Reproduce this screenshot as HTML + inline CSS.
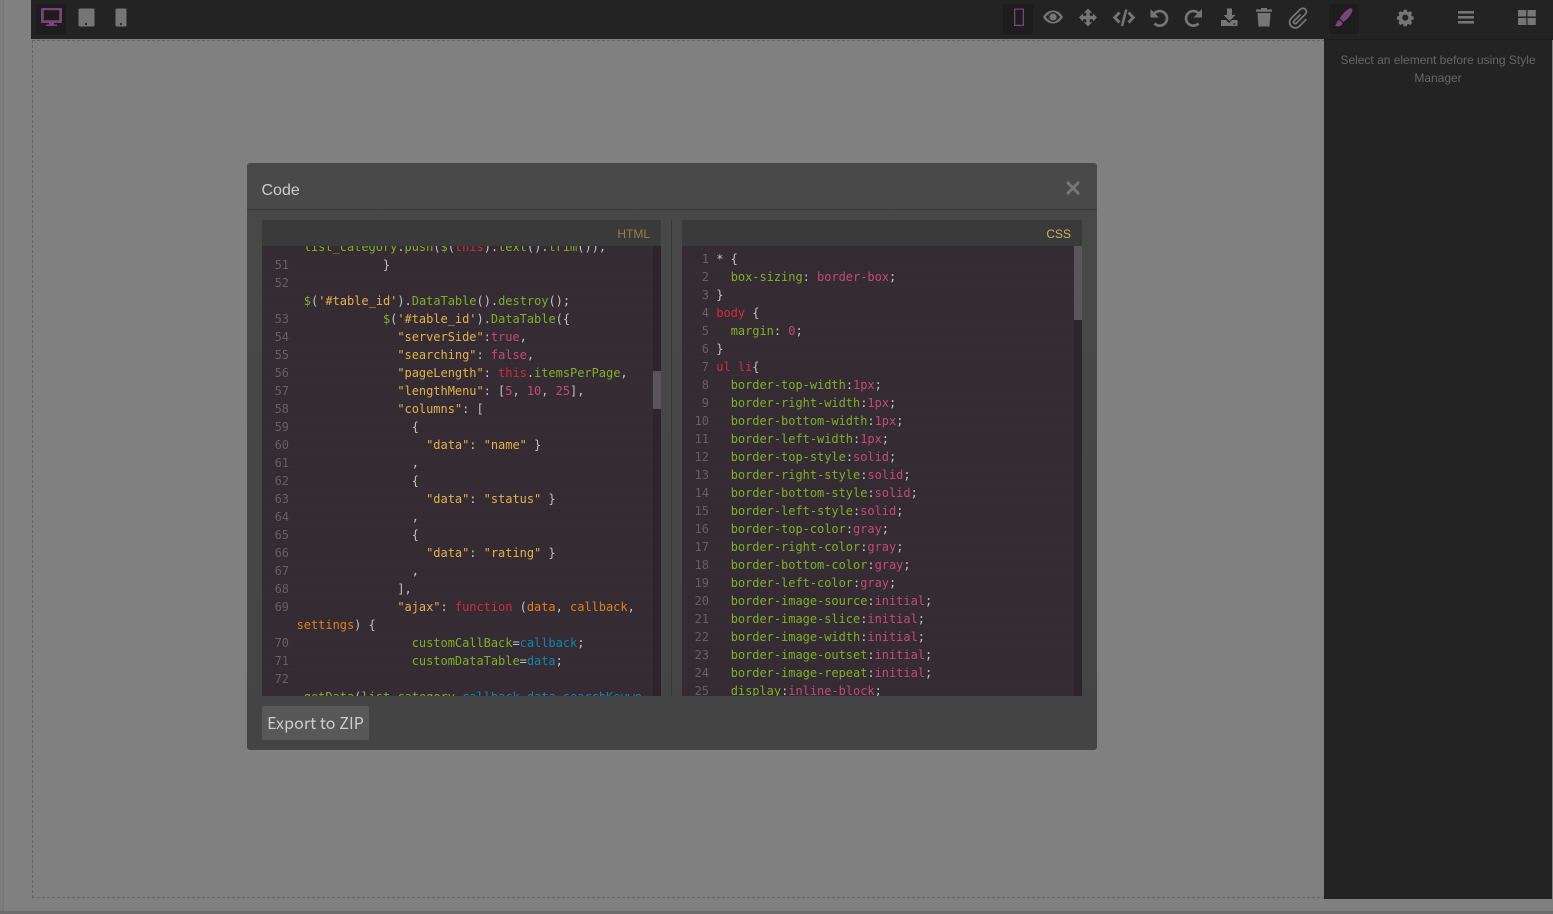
<!DOCTYPE html>
<html><head><meta charset="utf-8"><style>
html,body{margin:0;padding:0;width:1553px;height:914px;overflow:hidden;background:#808080;font-family:"Liberation Sans",sans-serif}
.a{position:absolute}
svg{position:absolute;overflow:visible}
.code{font:12px/18px "DejaVu Sans Mono","Liberation Mono",monospace;letter-spacing:-.03px;color:#c2c2c2;background:#342b33;overflow:hidden}
.r{position:relative;height:18px;white-space:pre;box-shadow:inset 0 -1px 0 rgba(255,255,255,.012)}
.r i{position:absolute;left:0;width:27px;text-align:right;font-style:normal;color:#656065}
.h .r{padding-left:34.600px}.c .r{padding-left:34.300px}
.g{color:#7eb02a}.d{color:#cf2d3e}.p{color:#c44a78}.o{color:#e0801c}.y{color:#e0b24e}.b{color:#1284b0}
.hd{background:#3a3a3a;height:26px;font-size:12px;line-height:28px;text-align:right}
</style></head><body>
<div class="a" style="left:0;top:0;width:3px;height:914px;background:#7c7c7c"></div>
<div class="a" style="left:3px;top:0;width:1px;height:914px;background:#767676"></div>
<div class="a" style="left:0;top:911px;width:1553px;height:3px;background:#6c6c6c"></div>
<div class="a" style="left:32px;top:40px;width:1291px;height:856px;border:1px dashed #666"></div>

<div class="a" style="left:31px;top:0;width:1522px;height:39px;background:#232323"></div>
<div class="a" style="left:1324px;top:39px;width:228px;height:860px;background:#232323"></div>
<div class="a" style="left:1324px;top:39px;width:229px;height:1px;background:#1e1e1e"></div>

<div class="a" style="left:36px;top:4px;width:30px;height:30px;background:#1d1d1d;border-radius:2px"></div>
<div class="a" style="left:1003px;top:4px;width:30px;height:30px;background:#1d1d1d;border-radius:2px"></div>
<div class="a" style="left:1329px;top:4px;width:30px;height:30px;background:#1d1d1d;border-radius:2px"></div>

<svg style="left:0;top:0" width="1553" height="40" viewBox="0 0 1553 40">
<g fill="#7a4379">
<path fill-rule="evenodd" d="M42 8h19a1 1 0 0 1 1 1v13a1 1 0 0 1-1 1h-7v1.500h3V26H46v-1.500h3V23h-7a1 1 0 0 1-1-1V9a1 1 0 0 1 1-1zm1.800 2.300v10h15.400v-10z"/>
<path fill-rule="evenodd" d="M1014 8.500h10V26h-10zm1.300 1.300v15h7.400v-15z"/>
<path d="M1338 20.500c2-.5 4 1 4.500 3-1 3-5 3.500-7.500 2.200 1.500-1 1.500-3.700 3-5.200z"/>
<path d="M1349.500 8.500c1.700-.8 3.300.6 2.800 2.500-1.300 4-4.800 8-8.800 11l-4-3.500c2.500-4 5.500-7.500 10-10z"/>
</g>
<g fill="#757575">
<rect x="78.500" y="8.500" width="16" height="18" rx="1.500"/>
<rect x="115.500" y="8.500" width="11" height="18" rx="1.500"/>
</g>
<rect x="85" y="23" width="2" height="2" fill="#2a2a2a"/><rect x="120" y="23" width="2" height="2" fill="#2a2a2a"/>
<g fill="#757575">
<!-- eye -->
<path d="M1043 17c2.500-4.300 6-6.500 10-6.500s7.500 2.200 10 6.500c-2.500 4.300-6 6.500-10 6.500s-7.500-2.200-10-6.500z"/>
<circle cx="1053" cy="17" r="5" fill="#232323"/>
<circle cx="1053" cy="17" r="3.600"/>
<path d="M1045.800 17c.8-1.200 1.800-2.200 2.900-3a6.500 6.500 0 0 0 0 6c-1.100-.8-2.100-1.800-2.900-3zM1060.200 17c-.8-1.200-1.800-2.200-2.900-3a6.500 6.500 0 0 1 0 6c1.100-.8 2.100-1.800 2.900-3z" fill="#232323"/>
<!-- move -->
<path d="M1088 8.500l4.200 4.200h-2.500v3.100h3.100v-2.500l4.200 4.200-4.200 4.200v-2.500h-3.100v3.100h2.500l-4.200 4.200-4.200-4.200h2.500v-3.100h-3.100v2.500l-4.200-4.200 4.200-4.200v2.500h3.100v-3.100h-2.500z"/>
<!-- code -->
<path d="M1119.500 12.500l-4.800 5 4.800 5" fill="none" stroke="#757575" stroke-width="2.900"/>
<path d="M1128.500 12.500l4.800 5-4.800 5" fill="none" stroke="#757575" stroke-width="2.900"/>
<path d="M1126.300 9.500L1122 26" fill="none" stroke="#757575" stroke-width="2.500"/>
<!-- undo -->
<path d="M1153.500 14.500a7.300 7.300 0 1 1 1 9" fill="none" stroke="#757575" stroke-width="2.700"/>
<path d="M1150.500 9v8.500h8.500z"/>
<!-- redo -->
<path d="M1199.500 14.500a7.300 7.300 0 1 0-1 9" fill="none" stroke="#757575" stroke-width="2.700"/>
<path d="M1202 9v8.500h-8.500z"/>
<!-- download -->
<path d="M1227 8.500h5v6.500h3.500l-6 6-6-6h3.500z"/>
<path fill-rule="evenodd" d="M1221 20h5l3 3 3-3h5.500v6h-16.500zm12 3.500v1h2.500v-1z"/>
<!-- trash -->
<path d="M1256 9.500h16v2.300h-16zM1261 8h6v2h-6zM1257.500 13h13l-.9 13.500h-11.200z"/>
<!-- clip -->
<path d="M1300.500 14.500l-6.500 6.500a1.600 1.600 0 0 0 2.300 2.300l9-9a3.500 3.500 0 0 0-5-5l-9 9a5.600 5.600 0 0 0 8 8l7-7" fill="none" stroke="#757575" stroke-width="1.800"/>
<!-- gear -->
<g transform="translate(1405.250 17.500) scale(.85) translate(-1405.250 -18)">
<path fill-rule="evenodd" d="M1403.500 8.800h3.500l.5 2.300 1.500.6 2-1.200 2.400 2.400-1.200 2 .6 1.500 2.300.5v3.500l-2.300.5-.6 1.500 1.200 2-2.400 2.400-2-1.200-1.500.6-.5 2.300h-3.500l-.5-2.300-1.500-.6-2 1.200-2.400-2.400 1.200-2-.6-1.500-2.300-.5v-3.500l2.300-.5.600-1.500-1.200-2 2.400-2.400 2 1.200 1.500-.6zm1.750 5.700a3.600 3.600 0 1 0 0 7.200 3.600 3.600 0 0 0 0-7.200z"/>
</g>
<!-- bars -->
<rect x="1458" y="11" width="16" height="2.600"/><rect x="1458" y="16" width="16" height="2.600"/><rect x="1458" y="21" width="16" height="2.600"/>
<!-- windows -->
<rect x="1518" y="10" width="8.300" height="6.500"/><rect x="1527.500" y="10" width="8.300" height="6.500"/><rect x="1518" y="18" width="8.300" height="7"/><rect x="1527.500" y="18" width="8.300" height="7"/>
</g>
</svg>

<div class="a" style="left:1324px;top:51px;width:228px;font-size:12px;line-height:18px;letter-spacing:-.01px;color:#666;text-align:center">Select an element before using Style Manager</div>

<!-- modal -->
<div class="a" style="left:247px;top:163px;width:850px;height:587px;background:linear-gradient(#494949,#444);border-radius:3px"></div>
<div class="a" style="left:247px;top:209px;width:850px;height:1px;background:#393939"></div>
<div class="a" style="left:261.500px;top:181px;font-size:16px;line-height:20px;color:#ccc">Code</div>
<svg style="left:1066px;top:181px" width="14" height="14"><path d="M1 1l12 12M13 1L1 13" stroke="#777" stroke-width="2.900"/></svg>
<div class="a" style="left:671px;top:220px;width:1px;height:476px;background:#383838"></div>

<div class="a hd" style="left:262px;top:220px;width:388px;padding-right:11px;color:#9c7c48">HTML</div>
<div class="a hd" style="left:682px;top:220px;width:389px;padding-right:11px;color:#cdb35f">CSS</div>

<div class="a code h" style="left:262px;top:246px;width:399px;height:450px">
<div style="margin-top:-8px">
<div class="r"> <span class="g">list_category</span>.<span class="g">push</span>(<span class="g">$</span>(<span class="d">this</span>).<span class="g">text</span>().<span class="g">trim</span>());</div>
<div class="r"><i>51</i>            }</div>
<div class="r"><i>52</i></div>
<div class="r"> <span class="g">$</span>(<span class="y">'#table_id'</span>).<span class="g">DataTable</span>().<span class="g">destroy</span>();</div>
<div class="r"><i>53</i>            <span class="g">$</span>(<span class="y">'#table_id'</span>).<span class="g">DataTable</span>({</div>
<div class="r"><i>54</i>              <span class="y">"serverSide"</span>:<span class="p">true</span>,</div>
<div class="r"><i>55</i>              <span class="y">"searching"</span>: <span class="p">false</span>,</div>
<div class="r"><i>56</i>              <span class="y">"pageLength"</span>: <span class="d">this</span>.<span class="g">itemsPerPage</span>,</div>
<div class="r"><i>57</i>              <span class="y">"lengthMenu"</span>: [<span class="p">5</span>, <span class="p">10</span>, <span class="p">25</span>],</div>
<div class="r"><i>58</i>              <span class="y">"columns"</span>: [</div>
<div class="r"><i>59</i>                {</div>
<div class="r"><i>60</i>                  <span class="y">"data"</span>: <span class="y">"name"</span> }</div>
<div class="r"><i>61</i>                ,</div>
<div class="r"><i>62</i>                {</div>
<div class="r"><i>63</i>                  <span class="y">"data"</span>: <span class="y">"status"</span> }</div>
<div class="r"><i>64</i>                ,</div>
<div class="r"><i>65</i>                {</div>
<div class="r"><i>66</i>                  <span class="y">"data"</span>: <span class="y">"rating"</span> }</div>
<div class="r"><i>67</i>                ,</div>
<div class="r"><i>68</i>              ],</div>
<div class="r"><i>69</i>              <span class="y">"ajax"</span>: <span class="d">function</span> (<span class="o">data</span>, <span class="o">callback</span>,</div>
<div class="r"><span class="o">settings</span>) {</div>
<div class="r"><i>70</i>                <span class="g">customCallBack</span>=<span class="b">callback</span>;</div>
<div class="r"><i>71</i>                <span class="g">customDataTable</span>=<span class="b">data</span>;</div>
<div class="r"><i>72</i></div>
<div class="r"> <span class="g">getData</span>(<span class="g">list_category</span>,<span class="b">callback</span>,<span class="b">data</span>,<span class="b">searchKeywo</span></div>
</div>
<div class="a" style="left:391px;top:0;width:8px;height:450px;background:#2e252c"></div>
<div class="a" style="left:391px;top:125px;width:8px;height:38px;background:#5a555a"></div>
</div>

<div class="a code c" style="left:682px;top:246px;width:400px;height:450px">
<div style="margin-top:4px">
<div class="r"><i>1</i>* {</div>
<div class="r"><i>2</i>  <span class="g">box-sizing</span>: <span class="p">border-box</span>;</div>
<div class="r"><i>3</i>}</div>
<div class="r"><i>4</i><span class="d">body</span> {</div>
<div class="r"><i>5</i>  <span class="g">margin</span>: <span class="p">0</span>;</div>
<div class="r"><i>6</i>}</div>
<div class="r"><i>7</i><span class="d">ul li</span>{</div>
<div class="r"><i>8</i>  <span class="g">border-top-width</span>:<span class="p">1px</span>;</div>
<div class="r"><i>9</i>  <span class="g">border-right-width</span>:<span class="p">1px</span>;</div>
<div class="r"><i>10</i>  <span class="g">border-bottom-width</span>:<span class="p">1px</span>;</div>
<div class="r"><i>11</i>  <span class="g">border-left-width</span>:<span class="p">1px</span>;</div>
<div class="r"><i>12</i>  <span class="g">border-top-style</span>:<span class="p">solid</span>;</div>
<div class="r"><i>13</i>  <span class="g">border-right-style</span>:<span class="p">solid</span>;</div>
<div class="r"><i>14</i>  <span class="g">border-bottom-style</span>:<span class="p">solid</span>;</div>
<div class="r"><i>15</i>  <span class="g">border-left-style</span>:<span class="p">solid</span>;</div>
<div class="r"><i>16</i>  <span class="g">border-top-color</span>:<span class="p">gray</span>;</div>
<div class="r"><i>17</i>  <span class="g">border-right-color</span>:<span class="p">gray</span>;</div>
<div class="r"><i>18</i>  <span class="g">border-bottom-color</span>:<span class="p">gray</span>;</div>
<div class="r"><i>19</i>  <span class="g">border-left-color</span>:<span class="p">gray</span>;</div>
<div class="r"><i>20</i>  <span class="g">border-image-source</span>:<span class="p">initial</span>;</div>
<div class="r"><i>21</i>  <span class="g">border-image-slice</span>:<span class="p">initial</span>;</div>
<div class="r"><i>22</i>  <span class="g">border-image-width</span>:<span class="p">initial</span>;</div>
<div class="r"><i>23</i>  <span class="g">border-image-outset</span>:<span class="p">initial</span>;</div>
<div class="r"><i>24</i>  <span class="g">border-image-repeat</span>:<span class="p">initial</span>;</div>
<div class="r"><i>25</i>  <span class="g">display</span>:<span class="p">inline-block</span>;</div>
</div>
<div class="a" style="left:392px;top:0;width:8px;height:450px;background:#2e252c"></div>
<div class="a" style="left:392px;top:0;width:8px;height:74px;background:#5a555a"></div>
</div>

<div class="a" style="left:262px;top:706px;width:107px;height:34px;background:#585858;border-radius:2px;color:#ccc;font:16px/32px 'Noto Sans CJK SC','DejaVu Sans',sans-serif;letter-spacing:.08px;text-align:center">Export to ZIP</div>
</body></html>
